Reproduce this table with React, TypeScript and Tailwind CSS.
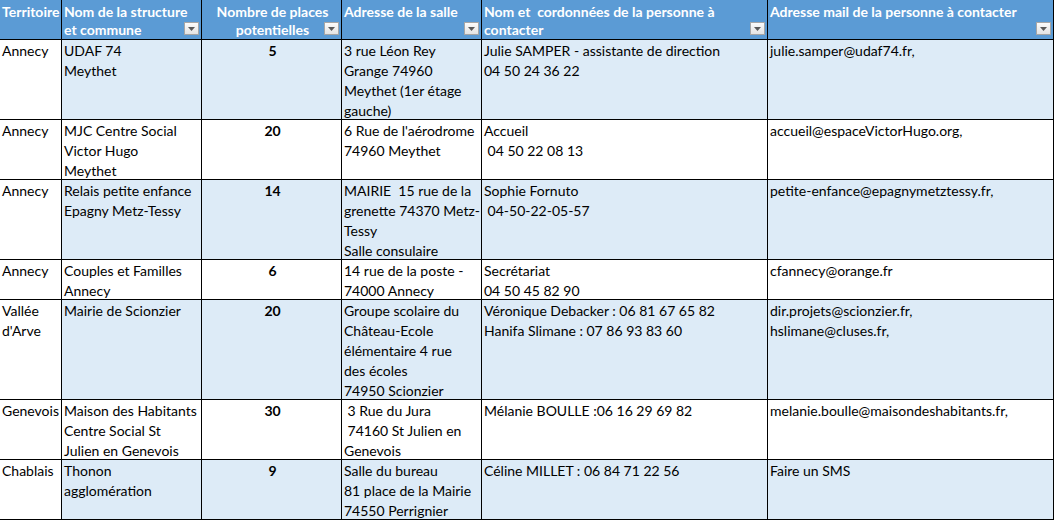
type Row = {
  territoire: string[];
  structure: string[];
  places: string;
  adresse: string[];
  contact: string[];
  mail: string[];
  h: string;
};

const rows: Row[] = [
  {
    territoire: ['Annecy'],
    structure: ['UDAF 74', 'Meythet'],
    places: '5',
    adresse: ['3 rue Léon Rey', 'Grange 74960', 'Meythet (1er étage', 'gauche)'],
    contact: ['Julie SAMPER - assistante de direction', '04 50 24 36 22'],
    mail: ['julie.samper@udaf74.fr,'],
    h: 'h-[80px]',
  },
  {
    territoire: ['Annecy'],
    structure: ['MJC Centre Social', 'Victor Hugo', 'Meythet'],
    places: '20',
    adresse: ["6 Rue de l'aérodrome", '74960 Meythet'],
    contact: ['Accueil', ' 04 50 22 08 13'],
    mail: ['accueil@espaceVictorHugo.org,'],
    h: 'h-[60px]',
  },
  {
    territoire: ['Annecy'],
    structure: ['Relais petite enfance', 'Epagny Metz-Tessy'],
    places: '14',
    adresse: ['MAIRIE  15 rue de la', 'grenette 74370 Metz-', 'Tessy', 'Salle consulaire'],
    contact: ['Sophie Fornuto', ' 04-50-22-05-57'],
    mail: ['petite-enfance@epagnymetztessy.fr,'],
    h: 'h-[80px]',
  },
  {
    territoire: ['Annecy'],
    structure: ['Couples et Familles', 'Annecy'],
    places: '6',
    adresse: ['14 rue de la poste -', '74000 Annecy'],
    contact: ['Secrétariat', '04 50 45 82 90'],
    mail: ['cfannecy@orange.fr'],
    h: 'h-[40px]',
  },
  {
    territoire: ['Vallée', "d'Arve"],
    structure: ['Mairie de Scionzier'],
    places: '20',
    adresse: ['Groupe scolaire du', 'Château-Ecole', 'élémentaire 4 rue', 'des écoles', '74950 Scionzier'],
    contact: ['Véronique Debacker : 06 81 67 65 82', 'Hanifa Slimane : 07 86 93 83 60'],
    mail: ['dir.projets@scionzier.fr,', 'hslimane@cluses.fr,'],
    h: 'h-[100px]',
  },
  {
    territoire: ['Genevois'],
    structure: ['Maison des Habitants', 'Centre Social St', 'Julien en Genevois'],
    places: '30',
    adresse: [' 3 Rue du Jura', ' 74160 St Julien en', 'Genevois'],
    contact: ['Mélanie BOULLE :06 16 29 69 82'],
    mail: ['melanie.boulle@maisondeshabitants.fr,'],
    h: 'h-[60px]',
  },
  {
    territoire: ['Chablais'],
    structure: ['Thonon', 'agglomération'],
    places: '9',
    adresse: ['Salle du bureau', '81 place de la Mairie', '74550 Perrignier'],
    contact: ['Céline MILLET : 06 84 71 22 56'],
    mail: ['Faire un SMS'],
    h: 'h-[60px]',
  },
];

function FilterButton() {
  return (
    <span className="absolute right-[2px] top-[22px] w-[15px] h-[13px] border border-[#a6a6a6] bg-gradient-to-b from-[#fbfbfb] to-[#e4e4e4] flex items-center justify-center">
      <svg width="7" height="4" viewBox="0 0 7 4">
        <path d="M0 0 H7 L3.5 4 Z" fill="#595959" />
      </svg>
    </span>
  );
}

function Lines({ lines }: { lines: string[] }) {
  return (
    <>
      {lines.map((l, i) => (
        <div key={i} className="whitespace-pre">
          {l}
        </div>
      ))}
    </>
  );
}

export default function App() {
  const head = 'relative h-[40px] bg-[#5b9bd5] text-white font-bold border-r border-b border-black pl-[2px] pt-[3px] leading-[18px] whitespace-pre';
  const cell = 'border-r border-b border-black pl-[2px] pt-[1px] leading-[20px] overflow-hidden';

  return (
    <div className="w-[1056px] h-[523px] bg-white overflow-hidden font-['Lato','Liberation_Sans',sans-serif] text-[14px] text-black">
      <div className="grid grid-cols-[62px_140px_140px_140px_286px_286px] w-[1054px]">
        {/* En-tête */}
        <div className={head}>Territoire</div>
        <div className={head}>
          Nom de la structure
          <br />
          et commune
          <FilterButton />
        </div>
        <div className={`${head} text-center`}>
          Nombre de places
          <br />
          potentielles
          <FilterButton />
        </div>
        <div className={head}>
          Adresse de la salle
          <FilterButton />
        </div>
        <div className={head}>
          {'Nom et  cordonnées de la personne à'}
          <br />
          contacter
          <FilterButton />
        </div>
        <div className={head}>
          Adresse mail de la personne à contacter
          <FilterButton />
        </div>

        {/* Lignes */}
        {rows.map((r, i) => {
          const band = i % 2 === 0 ? 'bg-[#ddebf7]' : 'bg-white';
          return (
            <div key={i} className="contents">
              <div className={`${cell} ${r.h} bg-white`}>
                <Lines lines={r.territoire} />
              </div>
              <div className={`${cell} ${r.h} ${band}`}>
                <Lines lines={r.structure} />
              </div>
              <div className={`${cell} ${r.h} ${band} text-center font-bold`}>{r.places}</div>
              <div className={`${cell} ${r.h} ${band}`}>
                <Lines lines={r.adresse} />
              </div>
              <div className={`${cell} ${r.h} ${band}`}>
                <Lines lines={r.contact} />
              </div>
              <div className={`${cell} ${r.h} ${band}`}>
                <Lines lines={r.mail} />
              </div>
            </div>
          );
        })}
      </div>
    </div>
  );
}
